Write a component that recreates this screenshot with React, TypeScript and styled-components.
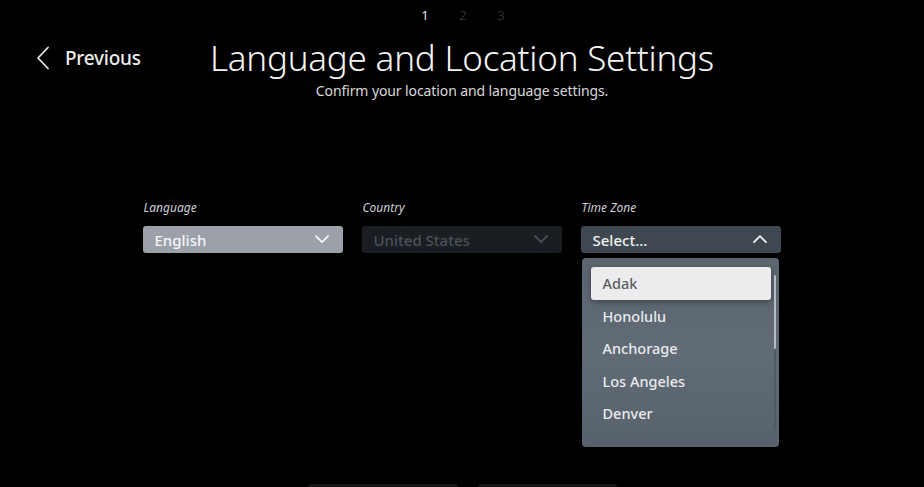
import React from 'react'
import styled, { createGlobalStyle } from 'styled-components'

const GlobalStyle = createGlobalStyle`
  html, body {
    margin: 0;
    padding: 0;
    background: #000;
  }
  body {
    font-family: 'Noto Sans', 'Open Sans', sans-serif;
    color: #f2f2f2;
    overflow: hidden;
  }
`

const Screen = styled.div`
  height: 487px;
  display: flex;
  flex-direction: column;
  overflow: hidden;
  background: #000;
`

const Pager = styled.div`
  display: flex;
  justify-content: center;
  gap: 28px;
  padding-top: 5px;
  height: 22px;
  font-size: 13px;
  line-height: 20px;
  padding-left: 2px;
`

const PageNum = styled.span<{ $active?: boolean }>`
  width: 10px;
  text-align: center;
  color: ${(p) => (p.$active ? '#e8e8e8' : '#2e2e2e')};
`

const Header = styled.div`
  display: grid;
  grid-template-columns: 1fr auto 1fr;
  align-items: center;
  margin-top: 7px;
`

const BackButton = styled.button`
  justify-self: start;
  display: flex;
  align-items: center;
  gap: 15px;
  margin-left: 36px;
  padding: 0;
  background: none;
  border: none;
  color: #ececec;
  font-family: inherit;
  font-size: 19px;
  font-weight: 500;
  letter-spacing: -0.25px;
  cursor: pointer;
`

const Title = styled.h1`
  margin: 0;
  font-size: 35px;
  font-weight: 300;
  letter-spacing: -0.22px;
  line-height: 48px;
  color: #f4f4f4;
`

const Subtitle = styled.p`
  margin: -1px 0 0;
  text-align: center;
  font-size: 14px;
  letter-spacing: -0.1px;
  color: #d8d8d8;
`

const Fields = styled.div`
  display: flex;
  justify-content: center;
  gap: 19px;
  margin-top: 99px;
  padding-right: 1px;
`

const Field = styled.div`
  position: relative;
  width: 200px;
  display: flex;
  flex-direction: column;
  gap: 10px;
`

const Label = styled.span`
  font-size: 12px;
  font-style: italic;
  color: #cfd2d6;
  padding-left: 1px;
`

const selectTones = {
  active: { bg: '#9ca1a9', fg: '#f4f5f7' },
  disabled: { bg: '#1a1e23', fg: '#4b525a' },
  open: { bg: '#3f4850', fg: '#f2f2f2' },
}

type Tone = keyof typeof selectTones

const SelectBox = styled.div<{ $tone: Tone }>`
  height: 27px;
  border-radius: 3px;
  display: flex;
  align-items: center;
  justify-content: space-between;
  padding: 0 14px 0 12px;
  background: ${(p) => selectTones[p.$tone].bg};
  color: ${(p) => selectTones[p.$tone].fg};
  font-size: 15px;
  font-weight: 500;
`

const Menu = styled.div`
  position: absolute;
  top: calc(100% + 5px);
  left: 1px;
  right: 2px;
  height: 189px;
  border-radius: 4px;
  background: linear-gradient(180deg, #5b656f 0%, #616b75 50%, #58626c 100%);
  box-shadow: 0 2px 8px rgba(0, 0, 0, 0.5);
  padding: 9px 0 0 9px;
  box-sizing: border-box;
  z-index: 2;
`

const Option = styled.div<{ $focused?: boolean }>`
  width: 180px;
  height: 32.5px;
  display: flex;
  align-items: center;
  padding-left: 12px;
  box-sizing: border-box;
  border-radius: 3px;
  font-size: 14.5px;
  font-weight: 500;
  color: ${(p) => (p.$focused ? '#5a5d62' : '#e9ebee')};
  background: ${(p) => (p.$focused ? '#ececee' : 'transparent')};
  box-shadow: ${(p) => (p.$focused ? '0 2px 6px rgba(0,0,0,0.35)' : 'none')};
`

const ScrollTrack = styled.div`
  position: absolute;
  right: 3px;
  top: 17px;
  bottom: 17px;
  width: 2px;
  border-radius: 1px;
  background: #505a64;
`

const ScrollThumb = styled.div`
  height: 74px;
  border-radius: 1px;
  background: #b6bcc3;
`

const Footer = styled.div`
  margin-top: auto;
  display: flex;
  justify-content: center;
  gap: 20px;
  transform: translateY(28px);
`

const FooterButton = styled.div<{ $w: number }>`
  width: ${(p) => p.$w}px;
  height: 31px;
  border-radius: 4px;
  background: #151719;
`

const Chevron = ({ dir, size = 14 }: { dir: 'up' | 'down'; size?: number }) => (
  <svg width={size} height={size * 0.6} viewBox="0 0 14 8" fill="none">
    <polyline
      points={dir === 'down' ? '1,1 7,7 13,1' : '1,7 7,1 13,7'}
      stroke="currentColor"
      strokeWidth="1.8"
      strokeLinecap="round"
      strokeLinejoin="round"
    />
  </svg>
)

const BackIcon = () => (
  <svg width="14" height="24" viewBox="0 0 14 24" fill="none">
    <polyline points="12,1.5 2,12 12,22.5" stroke="#e8e8e8" strokeWidth="1.8" strokeLinecap="round" strokeLinejoin="round" />
  </svg>
)

const zones = ['Adak', 'Honolulu', 'Anchorage', 'Los Angeles', 'Denver']

export default function App() {
  return (
    <>
      <GlobalStyle />
      <Screen>
        <Pager>
          <PageNum $active>1</PageNum>
          <PageNum>2</PageNum>
          <PageNum>3</PageNum>
        </Pager>
        <Header>
          <BackButton>
            <BackIcon />
            Previous
          </BackButton>
          <Title>Language and Location Settings</Title>
          <div />
        </Header>
        <Subtitle>Confirm your location and language settings.</Subtitle>
        <Fields>
          <Field>
            <Label>Language</Label>
            <SelectBox $tone="active">
              English
              <Chevron dir="down" />
            </SelectBox>
          </Field>
          <Field>
            <Label>Country</Label>
            <SelectBox $tone="disabled">
              United States
              <Chevron dir="down" />
            </SelectBox>
          </Field>
          <Field>
            <Label>Time Zone</Label>
            <SelectBox $tone="open">
              Select...
              <Chevron dir="up" />
            </SelectBox>
            <Menu>
              {zones.map((z, i) => (
                <Option key={z} $focused={i === 0}>
                  {z}
                </Option>
              ))}
              <ScrollTrack>
                <ScrollThumb />
              </ScrollTrack>
            </Menu>
          </Field>
        </Fields>
        <Footer>
          <FooterButton $w={150} />
          <FooterButton $w={139} />
        </Footer>
      </Screen>
    </>
  )
}
